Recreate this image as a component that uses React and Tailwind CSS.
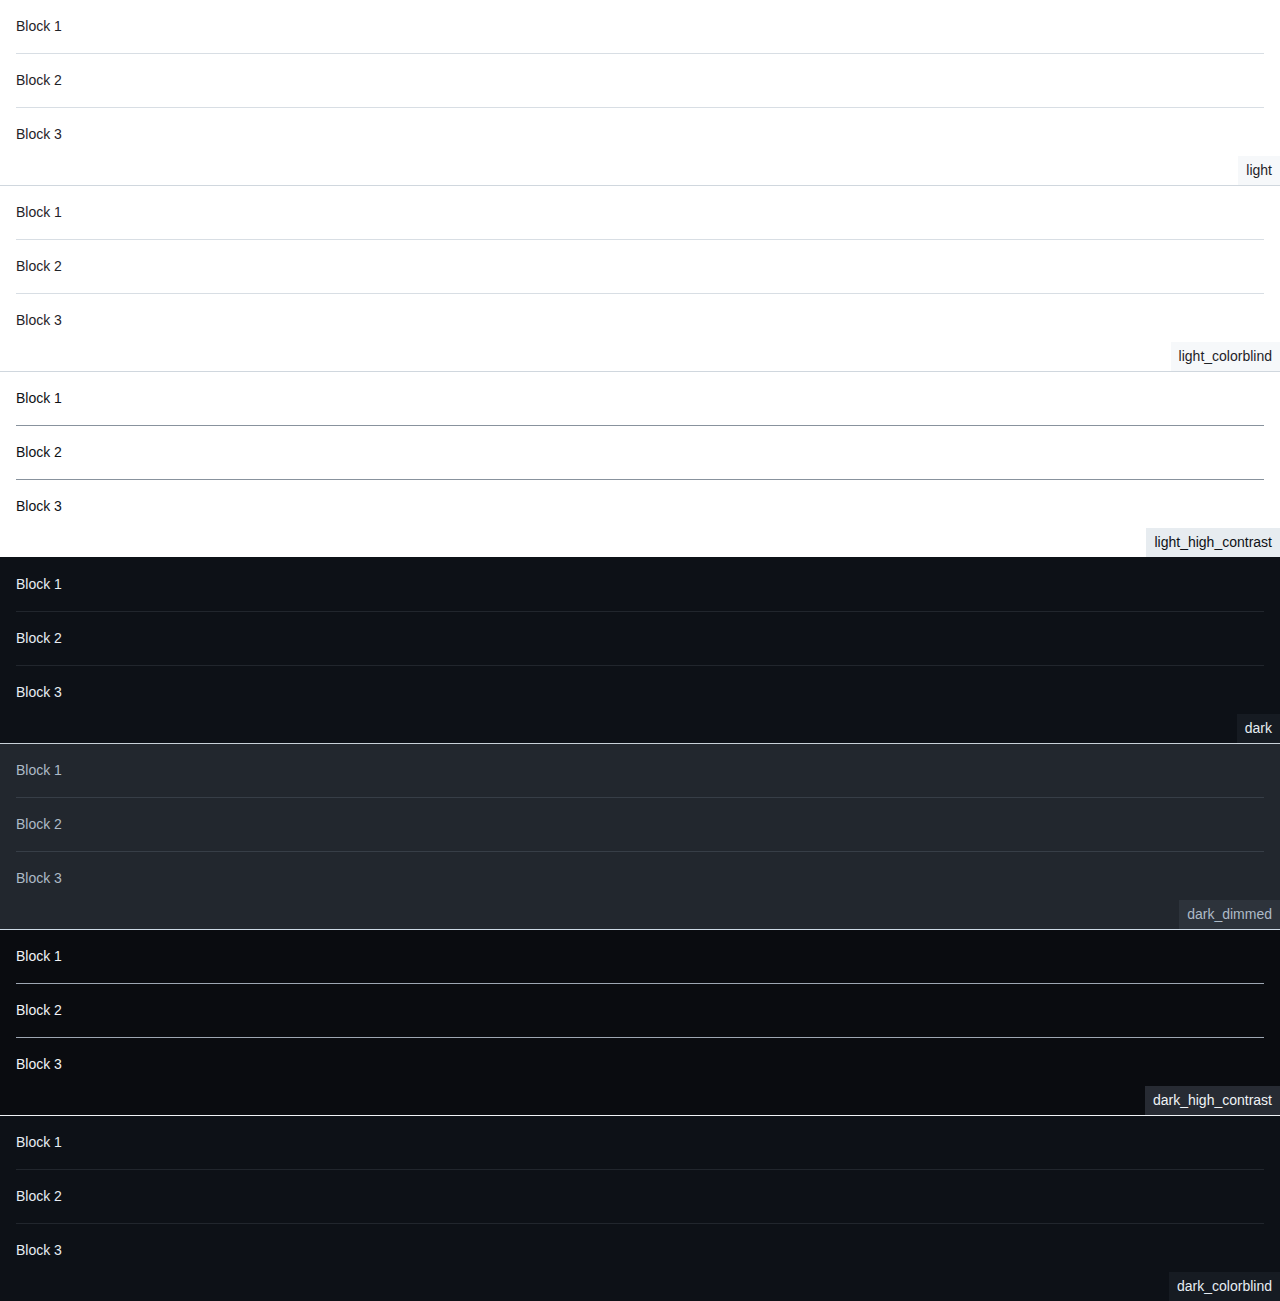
import React from "react";

const themes = [
  {
    name: "light",
    wrap: "bg-white text-[#1f2328] border-[#d0d7de]",
    sep: "border-[#d8dee4]",
    label: "bg-[#f6f8fa] text-[#1f2328]",
  },
  {
    name: "light_colorblind",
    wrap: "bg-white text-[#1f2328] border-[#d0d7de]",
    sep: "border-[#d8dee4]",
    label: "bg-[#f6f8fa] text-[#1f2328]",
  },
  {
    name: "light_high_contrast",
    wrap: "bg-white text-[#0e1116] border-[#0d1117]",
    sep: "border-[#88929d]",
    label: "bg-[#e7ecf0] text-[#0e1116]",
  },
  {
    name: "dark",
    wrap: "bg-[#0d1117] text-[#e6edf3] border-[#c9d1d9]",
    sep: "border-[#21262d]",
    label: "bg-[#161b22] text-[#e6edf3]",
  },
  {
    name: "dark_dimmed",
    wrap: "bg-[#22272e] text-[#adbac7] border-[#cdd9e5]",
    sep: "border-[#373e47]",
    label: "bg-[#2d333b] text-[#adbac7]",
  },
  {
    name: "dark_high_contrast",
    wrap: "bg-[#0a0c10] text-[#f0f3f6] border-[#f0f3f6]",
    sep: "border-[#9ea7b3]",
    label: "bg-[#272b33] text-[#f0f3f6]",
  },
  {
    name: "dark_colorblind",
    wrap: "bg-[#0d1117] text-[#e6edf3] border-[#c9d1d9]",
    sep: "border-[#21262d]",
    label: "bg-[#161b22] text-[#e6edf3]",
  },
];

const ThemeBlock = ({ theme }) => (
  <div className={`relative border-b pb-6 ${theme.wrap}`}>
    <div className="px-4">
      {["Block 1", "Block 2", "Block 3"].map((b, i) => (
        <div
          key={b}
          className={`py-4 leading-[21px] ${i < 2 ? `border-b ${theme.sep}` : ""}`}
        >
          {b}
        </div>
      ))}
    </div>
    <div className={`absolute bottom-0 right-0 px-2 py-1 leading-[21px] ${theme.label}`}>
      {theme.name}
    </div>
  </div>
);

export default function App() {
  return (
    <div className="text-sm font-['Liberation_Sans',Arial,sans-serif]">
      {themes.map((t) => (
        <ThemeBlock key={t.name} theme={t} />
      ))}
    </div>
  );
}
